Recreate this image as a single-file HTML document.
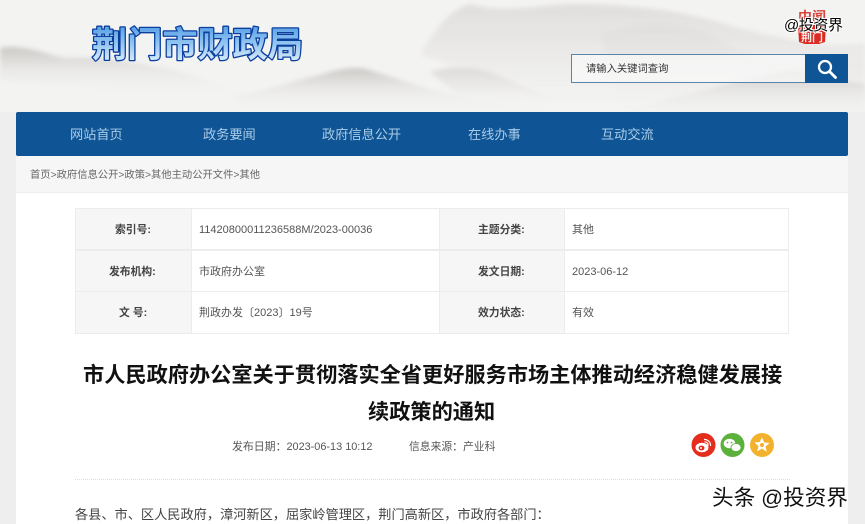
<!DOCTYPE html>
<html lang="zh"><head><meta charset="utf-8"><style>
html,body{margin:0;padding:0}
body{width:865px;height:524px;overflow:hidden;position:relative;background:#eeeeee;font-family:"Liberation Sans","Noto Sans CJK SC",sans-serif;color:#444}
.a{position:absolute;white-space:nowrap;line-height:1}
.nav{font-size:13.2px;color:#a9cbe8;top:128px}
.k{font-size:10.8px;font-weight:700;color:#444;text-align:center}
.v{font-size:11px;color:#555}
.l{position:absolute;background:#ececec}
</style></head><body>
<svg class="a" style="left:0;top:0" width="865" height="160" viewBox="0 0 865 160">
<defs>
<filter id="b" x="-10%" y="-20%" width="120%" height="140%"><feGaussianBlur stdDeviation="2.5"/></filter>
<linearGradient id="g" x1="0" y1="0" x2="0" y2="1"><stop offset="0" stop-color="#cbc8c5"/><stop offset=".45" stop-color="#e6e5e3" stop-opacity=".8"/><stop offset="1" stop-color="#f2f2f2" stop-opacity="0"/></linearGradient>
<linearGradient id="g2" x1="0" y1="0" x2="0" y2="1"><stop offset="0" stop-color="#dddbd9"/><stop offset=".6" stop-color="#ebeae8" stop-opacity=".8"/><stop offset="1" stop-color="#f2f2f2" stop-opacity="0"/></linearGradient>
<linearGradient id="lg" x1="0" y1="0" x2="0" y2="1"><stop offset="0" stop-color="#3a8ce0"/><stop offset=".5" stop-color="#8fc3f0"/><stop offset="1" stop-color="#f2f9ff"/></linearGradient>
</defs>
<rect width="865" height="160" fill="#f3f3f2"/>
<path d="M420 55 C440 20 455 8 470 4 C490 10 510 10 552 5 C590 2 630 6 663 10 C700 16 725 24 746 30 C780 36 810 48 865 44 L865 110 L560 110 C520 90 470 70 420 55Z" fill="url(#g2)" filter="url(#b)" opacity=".85"/>
<path d="M600 35 C640 20 690 22 720 40 C760 62 800 70 865 62 L865 112 L620 112Z" fill="url(#g2)" opacity=".55" filter="url(#b)"/>
<path d="M0 48 C10 46 20 47 35 50 C50 54 60 58 70 58 C100 56 130 62 165 68 C195 74 225 88 255 96 C200 98 100 90 0 80Z" fill="url(#g)" filter="url(#b)"/>
<path d="M235 96 C270 90 295 80 320 75 C335 70 345 68 362 68 C385 74 410 84 440 92 C470 100 500 105 540 108 L380 112 L235 108Z" fill="url(#g)" filter="url(#b)"/>
<path d="M430 72 C450 66 470 66 490 72 C515 82 535 92 556 98 L470 104Z" fill="url(#g2)" filter="url(#b)"/>
<path d="M625 110 C665 100 710 88 746 80 C765 74 785 70 802 70 C820 74 845 82 865 84 L865 118 L625 118Z" fill="url(#g)" filter="url(#b)"/>
<rect y="112" width="865" height="48" fill="#eeeeee"/>
<text x="92" y="57" font-size="35" font-weight="700" font-family="'Noto Sans CJK SC',sans-serif" fill="url(#lg)" stroke="#0b3f9e" stroke-width="2.6" stroke-linejoin="round" paint-order="stroke" textLength="211" lengthAdjust="spacingAndGlyphs">荆门市财政局</text>
<path d="M798 25h28l-1 17-6 2h-14l-6-2z" fill="#db2b22"/>
<text x="812" y="21" font-size="13" font-weight="700" fill="#d9443c" text-anchor="middle" font-family="'Noto Sans CJK SC',sans-serif" textLength="28" lengthAdjust="spacingAndGlyphs">中闻</text>
<text x="812" y="41" font-size="11" font-weight="700" fill="#f8e4e0" text-anchor="middle" font-family="'Noto Sans CJK SC',sans-serif">荆门</text>
</svg>
<div class="a" style="left:784px;top:18px;font-size:15px;color:#000;text-shadow:0 0 1px #fff,1px 1px 0 #fff,-1px -1px 0 #fff,1px -1px 0 #fff,-1px 1px 0 #fff;letter-spacing:-.4px">@投资界</div>

<div class="a" style="left:571px;top:54px;width:235px;height:29px;box-sizing:border-box;border:1px solid #5a84a8;border-right:0;background:rgba(248,248,248,.8)"></div>
<div class="a" style="left:586px;top:65px;font-size:10.3px;color:#333">请输入关键词查询</div>
<div class="a" style="left:805px;top:54px;width:43px;height:29px;background:#0f5595"></div>
<svg class="a" style="left:805px;top:54px" width="43" height="29" viewBox="0 0 43 29"><circle cx="20" cy="13" r="6" fill="none" stroke="#fff" stroke-width="2.3"/><path d="M24.5 17.5l6 6" stroke="#fff" stroke-width="2.8" stroke-linecap="round"/></svg>

<div class="a" style="left:16px;top:112px;width:832px;height:44px;background:#0f5595;border-radius:2px"></div>
<div class="a nav" style="left:70px">网站首页</div>
<div class="a nav" style="left:203px">政务要闻</div>
<div class="a nav" style="left:322px">政府信息公开</div>
<div class="a nav" style="left:468px">在线办事</div>
<div class="a nav" style="left:601px">互动交流</div>

<div class="a" style="left:16px;top:156px;width:832px;height:368px;background:#fff"></div>
<div class="a" style="left:16px;top:156px;width:832px;height:36px;background:#f6f6f6;border-bottom:1px solid #eee"></div>
<div class="a" style="left:30px;top:171px;font-size:10.3px;color:#666">首页&gt;政府信息公开&gt;政策&gt;其他主动公开文件&gt;其他</div>

<div class="a" style="left:75px;top:208px;width:116px;height:125px;background:#f6f6f6"></div>
<div class="a" style="left:439px;top:208px;width:125px;height:125px;background:#f6f6f6"></div>
<div class="l" style="left:75px;top:208px;width:714px;height:1px"></div>
<div class="l" style="left:75px;top:249px;width:714px;height:2px"></div>
<div class="l" style="left:75px;top:291px;width:714px;height:1px"></div>
<div class="l" style="left:75px;top:333px;width:714px;height:1px"></div>
<div class="l" style="left:75px;top:208px;width:1px;height:125px"></div>
<div class="l" style="left:191px;top:208px;width:1px;height:125px"></div>
<div class="l" style="left:439px;top:208px;width:1px;height:125px"></div>
<div class="l" style="left:564px;top:208px;width:1px;height:125px"></div>
<div class="l" style="left:788px;top:208px;width:1px;height:125px"></div>

<div class="a k" style="left:115px;top:225px">索引号:</div>
<div class="a k" style="left:109px;top:267px">发布机构:</div>
<div class="a k" style="left:119px;top:308px">文 号:</div>
<div class="a k" style="left:478px;top:225px">主题分类:</div>
<div class="a k" style="left:478px;top:267px">发文日期:</div>
<div class="a k" style="left:478px;top:308px">效力状态:</div>
<div class="a v" style="left:199px;top:225px">11420800011236588M/2023-00036</div>
<div class="a v" style="left:199px;top:267px">市政府办公室</div>
<div class="a v" style="left:199px;top:308px">荆政办发〔2023〕19号</div>
<div class="a v" style="left:572px;top:225px">其他</div>
<div class="a v" style="left:572px;top:267px">2023-06-12</div>
<div class="a v" style="left:572px;top:308px">有效</div>

<div class="a" style="left:83px;top:365px;font-size:21.2px;font-weight:700;color:#111">市人民政府办公室关于贯彻落实全省更好服务市场主体推动经济稳健发展接</div>
<div class="a" style="left:368px;top:402px;font-size:21.2px;font-weight:700;color:#111">续政策的通知</div>

<div class="a" style="left:232px;top:442px;font-size:10.9px;color:#555">发布日期：2023-06-13 10:12</div>
<div class="a" style="left:409px;top:442px;font-size:10.8px;color:#555">信息来源：产业科</div>

<svg class="a" style="left:690px;top:431px" width="86" height="28" viewBox="0 0 86 28">
<circle cx="13.5" cy="14" r="12" fill="#e42d1c"/>
<ellipse cx="12" cy="16.5" rx="6.5" ry="4.8" fill="#fff"/><ellipse cx="11.5" cy="17" rx="3" ry="2.4" fill="#e42d1c"/><circle cx="11" cy="17" r="1" fill="#fff"/>
<path d="M14 8.5a6 6 0 0 1 6.5 6.5M14.5 11a3 3 0 0 1 3.5 3.5" fill="none" stroke="#fff" stroke-width="1.2"/>
<circle cx="42.5" cy="14" r="12" fill="#5cb13c"/>
<ellipse cx="39.5" cy="12.5" rx="5.8" ry="4.8" fill="#fff"/><ellipse cx="46" cy="16.5" rx="5" ry="4" fill="#fff" stroke="#5cb13c" stroke-width=".8"/>
<circle cx="37.5" cy="11.5" r=".9" fill="#5cb13c"/><circle cx="41.5" cy="11.5" r=".9" fill="#5cb13c"/>
<circle cx="72" cy="14" r="12" fill="#f3b22e"/>
<path d="M72 6.5l2.2 5 5.4.5-4.1 3.5 1.3 5.3L72 17.6l-4.8 2.7 1.3-5.3-4.1-3.5 5.4-.5z" fill="#fff"/><circle cx="72" cy="14" r="2" fill="#f3b22e"/>
</svg>

<div class="a" style="left:75px;top:479px;width:715px;border-top:1px dotted #dedede"></div>
<div class="a" style="left:75px;top:508px;font-size:13.2px;color:#444">各县、市、区人民政府，漳河新区，屈家岭管理区，荆门高新区，市政府各部门：</div>
<div class="a" style="left:712px;top:487px;font-size:21.6px;color:#111;text-shadow:0 1px 0 #fff,1px 0 0 #fff,-1px 0 0 #fff">头条 @投资界</div>
</body></html>
